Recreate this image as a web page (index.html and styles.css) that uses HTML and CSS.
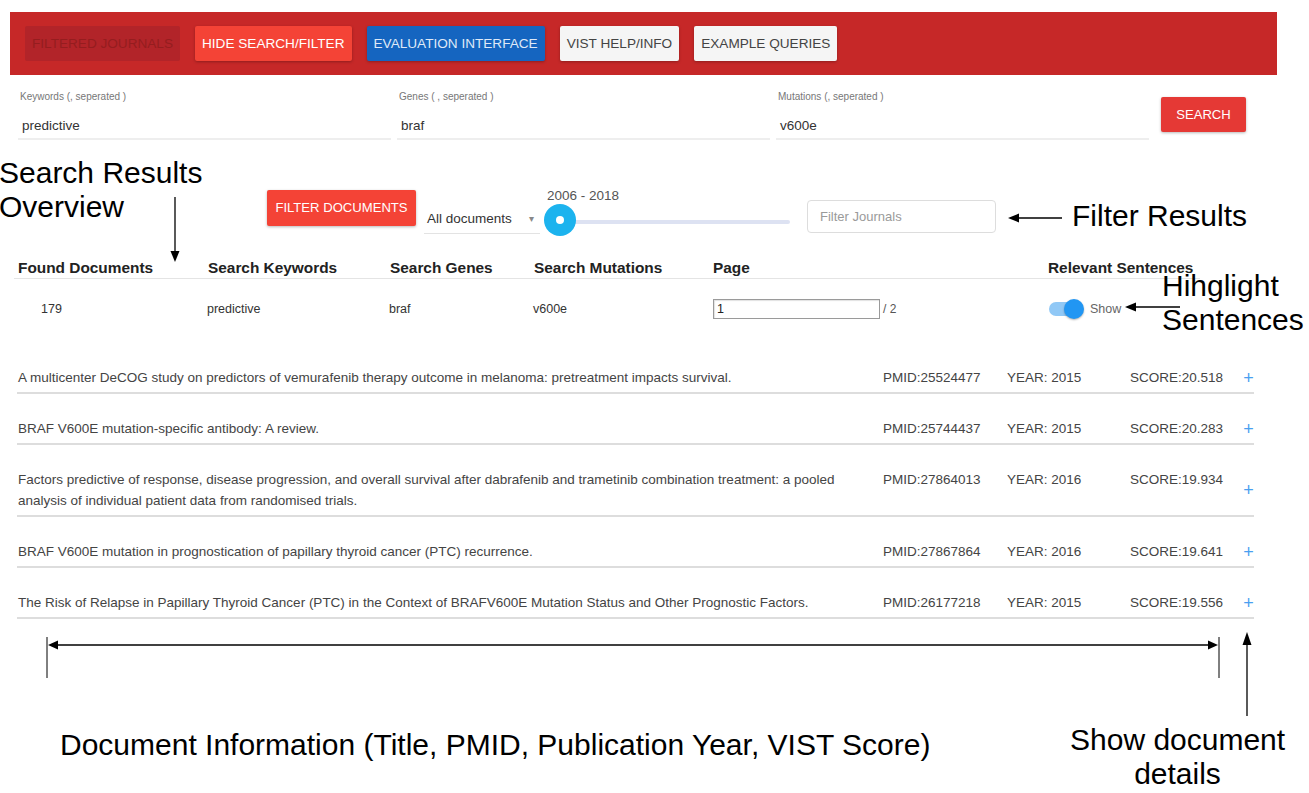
FILE: index.html
```html
<!DOCTYPE html>
<html lang="en">
<head>
<meta charset="utf-8">
<title>VIST search</title>
<link rel="stylesheet" href="styles.css">
</head>
<body>
<div class="page">
  <header class="topbar">
    <button class="btn btn-muted">Filtered Journals</button>
    <button class="btn btn-red">Hide Search/Filter</button>
    <button class="btn btn-blue">Evaluation Interface</button>
    <button class="btn btn-light">Vist Help/Info</button>
    <button class="btn btn-light">Example Queries</button>
  </header>

  <section class="search">
    <div class="field">
      <label>Keywords (, seperated )</label>
      <div class="value">predictive</div>
    </div>
    <div class="field">
      <label>Genes ( , seperated )</label>
      <div class="value">braf</div>
    </div>
    <div class="field">
      <label>Mutations (, seperated )</label>
      <div class="value">v600e</div>
    </div>
    <button class="btn btn-search">Search</button>
  </section>

  <section class="filters">
    <button class="btn btn-red btn-filter">Filter Documents</button>
    <div class="select">
      <span>All documents</span>
      <span class="caret">&#9662;</span>
    </div>
    <div class="slider">
      <div class="slider-label">2006 - 2018</div>
      <div class="track"></div>
      <div class="thumb"><div class="thumb-dot"></div></div>
    </div>
    <div class="journal-input">Filter Journals</div>
  </section>

  <section class="summary">
    <div class="th">Found Documents</div>
    <div class="th">Search Keywords</div>
    <div class="th">Search Genes</div>
    <div class="th">Search Mutations</div>
    <div class="th">Page</div>
    <div class="th">Relevant Sentences</div>

    <div class="td td-count">179</div>
    <div class="td">predictive</div>
    <div class="td">braf</div>
    <div class="td">v600e</div>
    <div class="td td-page"><div class="page-input">1</div><span class="page-total">/ 2</span></div>
    <div class="td td-toggle"><div class="toggle"><div class="toggle-knob"></div></div><span class="toggle-label">Show</span></div>
  </section>

  <section class="results">
    <div class="row">
      <div class="title">A multicenter DeCOG study on predictors of vemurafenib therapy outcome in melanoma: pretreatment impacts survival.</div>
      <div class="pmid">PMID:25524477</div>
      <div class="year">YEAR: 2015</div>
      <div class="score">SCORE:20.518</div>
      <div class="plus">+</div>
    </div>
    <div class="row">
      <div class="title">BRAF V600E mutation-specific antibody: A review.</div>
      <div class="pmid">PMID:25744437</div>
      <div class="year">YEAR: 2015</div>
      <div class="score">SCORE:20.283</div>
      <div class="plus">+</div>
    </div>
    <div class="row">
      <div class="title">Factors predictive of response, disease progression, and overall survival after dabrafenib and trametinib combination treatment: a pooled analysis of individual patient data from randomised trials.</div>
      <div class="pmid">PMID:27864013</div>
      <div class="year">YEAR: 2016</div>
      <div class="score">SCORE:19.934</div>
      <div class="plus">+</div>
    </div>
    <div class="row">
      <div class="title">BRAF V600E mutation in prognostication of papillary thyroid cancer (PTC) recurrence.</div>
      <div class="pmid">PMID:27867864</div>
      <div class="year">YEAR: 2016</div>
      <div class="score">SCORE:19.641</div>
      <div class="plus">+</div>
    </div>
    <div class="row">
      <div class="title">The Risk of Relapse in Papillary Thyroid Cancer (PTC) in the Context of BRAFV600E Mutation Status and Other Prognostic Factors.</div>
      <div class="pmid">PMID:26177218</div>
      <div class="year">YEAR: 2015</div>
      <div class="score">SCORE:19.556</div>
      <div class="plus">+</div>
    </div>
  </section>

  <!-- annotation overlay -->
  <svg class="arrows" width="1309" height="793" viewBox="0 0 1309 793">
    <g stroke="#000" stroke-width="1.3" fill="none">
      <line x1="175" y1="197" x2="175" y2="252"/>
      <line x1="1062" y1="218" x2="1016" y2="218"/>
      <line x1="1180" y1="307" x2="1134" y2="307"/>
      <line x1="56" y1="645" x2="1210" y2="645"/>
      <line x1="47" y1="637" x2="47" y2="678" stroke-width="1"/>
      <line x1="1219" y1="637" x2="1219" y2="678" stroke-width="1"/>
      <line x1="1247" y1="644" x2="1247" y2="716"/>
    </g>
    <g fill="#000">
      <polygon points="170.5,251 179.5,251 175,262"/>
      <polygon points="1008,218 1019,213.5 1019,222.5"/>
      <polygon points="1125,307 1136,302.5 1136,311.5"/>
      <polygon points="48,645 58,640.5 58,649.5"/>
      <polygon points="1218,645 1208,640.5 1208,649.5"/>
      <polygon points="1247,632 1242.5,645 1251.5,645"/>
    </g>
  </svg>
  <div class="note note-overview">Search Results<br>Overview</div>
  <div class="note note-filter">Filter Results</div>
  <div class="note note-highlight">Hihglight<br>Sentences</div>
  <div class="note note-docinfo">Document Information (Title, PMID, Publication Year, VIST Score)</div>
  <div class="note note-details">Show document<br>details</div>
</div>
</body>
</html>
```
FILE: styles.css
```css
* { box-sizing: border-box; }

body {
  margin: 0;
  background: #ffffff;
  font-family: "Liberation Sans", Arial, sans-serif;
  color: #333333;
}

.page {
  position: relative;
  width: 1309px;
  height: 793px;
  overflow: hidden;
}

/* ---------- top bar ---------- */
.topbar {
  margin: 12px 0 0 10px;
  width: 1267px;
  height: 63px;
  background: #c62828;
  display: flex;
  align-items: center;
  gap: 15px;
  padding: 0 15px;
}

.btn {
  font-family: "Liberation Sans", Arial, sans-serif;
  font-size: 13.6px;
  text-transform: uppercase;
  border: none;
  border-radius: 2px;
  height: 35px;
  line-height: 35px;
  padding: 0 7px;
  box-shadow: 0 1px 3px rgba(0, 0, 0, 0.28);
}

.btn-muted { background: #b22429; color: #951d1f; box-shadow: none; }
.btn-red { background: #f44336; color: #ffffff; }
.btn-blue { background: #1565c0; color: #dfe9f7; }
.btn-light { background: #f5f5f5; color: #444444; }

/* ---------- search fields ---------- */
.search {
  display: flex;
  align-items: flex-start;
  padding: 16px 0 0 18px;
}

.field {
  width: 373px;
  margin-right: 6px;
}

.field label {
  display: block;
  font-size: 10px;
  line-height: 12px;
  color: #777777;
  padding-left: 2px;
}

.field .value {
  margin-top: 14px;
  font-size: 13.5px;
  line-height: 18px;
  padding: 0 0 3px 4px;
  border-bottom: 2px solid #eeeeee;
  color: #333333;
}

.btn-search {
  margin: 6px 0 0 6px;
  width: 85px;
  background: #e53935;
  color: #ffffff;
  padding: 0;
  height: 35px;
  font-size: 13.1px;
}

/* ---------- filter row ---------- */
.filters {
  display: flex;
  align-items: flex-start;
  height: 50px;
  margin-top: 46px;
  padding-left: 267px;
}

.btn-filter {
  margin-top: 4px;
  width: 149px;
  height: 36px;
  line-height: 36px;
  padding: 0;
  font-size: 13.1px;
}

.select {
  margin: 18px 0 0 8px;
  width: 116px;
  height: 30px;
  display: flex;
  align-items: center;
  justify-content: space-between;
  padding: 0 6px 0 3px;
  font-size: 13.5px;
  color: #333333;
  border-bottom: 1px solid #e3e3e3;
}

.caret {
  font-size: 10px;
  color: #888888;
}

.slider {
  position: relative;
  margin-left: 4px;
  width: 248px;
  height: 50px;
}

.slider-label {
  margin: 2px 0 0 3px;
  font-size: 13.5px;
  line-height: 16px;
  color: #555555;
}

.track {
  margin: 16px 0 0 16px;
  width: 230px;
  height: 4px;
  background: #dde2f2;
  border-radius: 2px;
}

.thumb {
  position: absolute;
  left: 0;
  top: 18px;
  width: 32px;
  height: 32px;
  border-radius: 50%;
  background: #1cb3ee;
  display: flex;
  align-items: center;
  justify-content: center;
}

.thumb-dot {
  width: 8px;
  height: 8px;
  border-radius: 50%;
  background: #ffffff;
}

.journal-input {
  margin: 14px 0 0 15px;
  width: 189px;
  height: 33px;
  border: 1px solid #dddddd;
  border-radius: 4px;
  padding-left: 12px;
  font-size: 13px;
  line-height: 31px;
  color: #9a9a9a;
}

/* ---------- summary table ---------- */
.summary {
  margin: 23px 0 0 14px;
  width: 1186px;
  display: grid;
  grid-template-columns: 190px 182px 144px 179px 335px 156px;
}

.th {
  font-size: 15.4px;
  font-weight: bold;
  line-height: 18px;
  padding: 0 0 1px 4px;
  color: #222222;
  border-bottom: 1px solid #e4e4e4;
}

.td {
  font-size: 12.5px;
  color: #333333;
  height: 60px;
  padding: 20px 0 0 3px;
  line-height: 20px;
}

.td-count { padding-left: 27px; }

.td-page {
  display: flex;
  align-items: flex-start;
  padding-left: 4px;
}

.page-input {
  width: 167px;
  height: 20px;
  border: 1px solid #9a9a9a;
  box-shadow: inset 1px 1px 1px rgba(0, 0, 0, 0.12);
  font-size: 12.5px;
  line-height: 18px;
  padding-left: 3px;
  color: #222222;
}

.page-total {
  margin-left: 3px;
  font-size: 12px;
  color: #555555;
  line-height: 20px;
}

.td-toggle {
  display: flex;
  align-items: flex-start;
  padding: 23px 0 0 5px;
}

.toggle {
  position: relative;
  width: 34px;
  height: 14px;
  border-radius: 7px;
  background: #90c8f6;
}

.toggle-knob {
  position: absolute;
  right: -1px;
  top: -3px;
  width: 20px;
  height: 20px;
  border-radius: 50%;
  background: #2196f3;
  box-shadow: 0 1px 2px rgba(0, 0, 0, 0.3);
}

.toggle-label {
  margin: -3px 0 0 7px;
  font-size: 12.5px;
  color: #666666;
}

/* ---------- results ---------- */
.results {
  margin: 4px 0 0 17px;
  width: 1237px;
}

.row {
  display: flex;
  align-items: flex-start;
  padding: 24px 0 4px 0;
  border-bottom: 2px solid #dddddd;
  font-size: 13.5px;
  line-height: 21px;
  color: #444444;
}

.title {
  width: 866px;
  padding: 0 20px 0 1px;
}

.pmid { width: 124px; }
.year { width: 123px; }
.score { width: 113px; }

.plus {
  align-self: center;
  width: 11px;
  font-size: 18px;
  color: #4a9ff0;
  line-height: 20px;
  text-align: center;
}

/* ---------- annotations ---------- */
.arrows {
  position: absolute;
  left: 0;
  top: 0;
  pointer-events: none;
}

.note {
  position: absolute;
  font-family: "Liberation Sans", Arial, sans-serif;
  font-size: 30px;
  line-height: 34px;
  color: #000000;
  white-space: nowrap;
}

.note-overview { left: -1px; top: 156px; }
.note-filter { left: 1072px; top: 199px; }
.note-highlight { left: 1162px; top: 269px; }
.note-docinfo { left: 60px; top: 728px; }
.note-details { left: 1070px; top: 723px; width: 215px; text-align: center; }
```
